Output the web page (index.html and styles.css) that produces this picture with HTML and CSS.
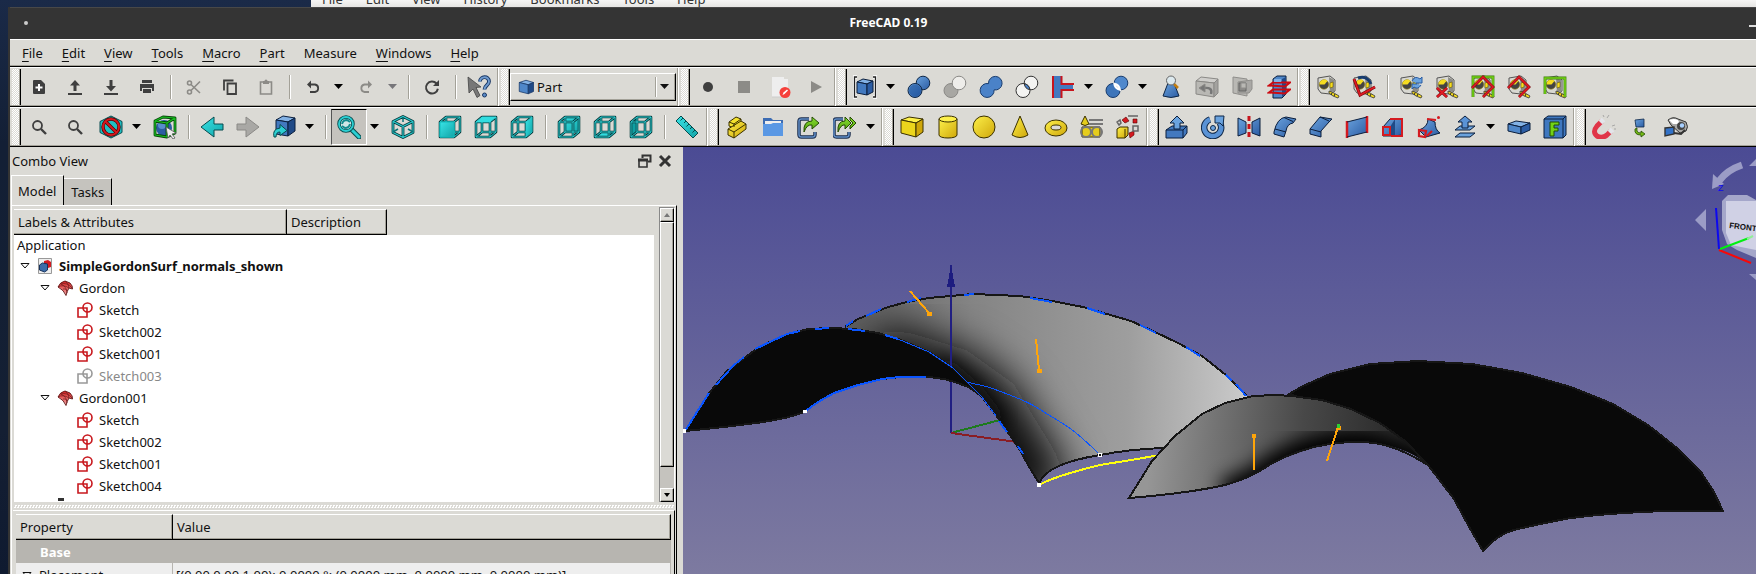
FILE: index.html
```html
<!DOCTYPE html>
<html lang="en">
<head>
<meta charset="utf-8">
<title>FreeCAD 0.19</title>
<link rel="stylesheet" href="styles.css">
</head>
<body>
<svg class="sprite" width="0" height="0" aria-hidden="true">
<defs>
<linearGradient id="gb" x1="0" y1="0" x2="1" y2="1"><stop offset="0" stop-color="#6ba3de"/><stop offset="1" stop-color="#2b5ca3"/></linearGradient>
<linearGradient id="gy" x1="0" y1="0" x2="1" y2="1"><stop offset="0" stop-color="#fdf04a"/><stop offset="1" stop-color="#cfa70a"/></linearGradient>
<linearGradient id="gt" x1="0" y1="0" x2="1" y2="1"><stop offset="0" stop-color="#38e3e6"/><stop offset="1" stop-color="#12a5a8"/></linearGradient>
<linearGradient id="gg" x1="0" y1="0" x2="0" y2="1"><stop offset="0" stop-color="#8ae234"/><stop offset="1" stop-color="#4e9a06"/></linearGradient>
<linearGradient id="gr" x1="0" y1="0" x2="0" y2="1"><stop offset="0" stop-color="#d82020"/><stop offset="1" stop-color="#f4a6a6"/></linearGradient>
<g id="wire" fill="none" stroke="#073c3f" stroke-width="2.6" stroke-linejoin="round"><path d="M2 7h14v15H2zM2 7l6-5h14v15l-6 5M16 7l6-5M8 2v15h14M8 17l-6 5"/></g>
<g id="wire2" fill="none" stroke="#2ccfd2" stroke-width="1" stroke-linejoin="round"><path d="M2 7h14v15H2zM2 7l6-5h14v15l-6 5M16 7l6-5M8 2v15h14M8 17l-6 5"/></g>
<g id="tape"><path d="M2 3l12-2 5 4v11l-5 3-9-1-3-4z" fill="#d8d8d2" stroke="#555"/><path d="M13 2l5 3v11l-4 2z" fill="#8b8b86"/><circle cx="8" cy="9.500" r="4.700" fill="#444" stroke="#8d7b00" stroke-width=".6"/><path d="M3.500 9.500a4.700 4.700 0 0 1 8-3.500l-3 3.500z" fill="#f5dc20"/><path d="M14 8l3-1v5l-3 1z" fill="#f5dc20" stroke="#554900" stroke-width=".5"/><path d="M13 16l5 2 5 3-1 2-5-2-4-3z" fill="#f5dc20" stroke="#333" stroke-width=".8"/><path d="M16 18l-1 2M19 19l-1 2" stroke="#222" stroke-width="1"/></g>
</defs>
<symbol id="i-new" viewBox="0 0 24 24"><path d="M7 5h7l4 4v9a1 1 0 0 1-1 1H7a1 1 0 0 1-1-1V6a1 1 0 0 1 1-1z" fill="#3f3f3f"/><path d="M12 9v7M8.500 12.500h7" stroke="#fff" stroke-width="2"/></symbol>
<symbol id="i-up" viewBox="0 0 24 24"><path d="M12 5l5 5.500h-3.500V16h-3v-5.500H7zM5 18h14v2H5z" fill="#3f3f3f"/></symbol>
<symbol id="i-down" viewBox="0 0 24 24"><path d="M12 16.500L7 11h3.500V5h3v6H17zM5 18h14v2H5z" fill="#3f3f3f"/></symbol>
<symbol id="i-print" viewBox="0 0 24 24"><path d="M7 5h10v3H7zM5 9h14v7h-2v-3H7v3H5z M8 14h8v4H8z" fill="#3f3f3f"/></symbol>
<symbol id="i-cut" viewBox="0 0 24 24" fill="none" stroke="#8c8b87" stroke-width="1.600"><circle cx="7.500" cy="8" r="2"/><circle cx="7.500" cy="17" r="2"/><path d="M9 9.500l9 8.500M9 15.500L18 6.500"/></symbol>
<symbol id="i-copy" viewBox="0 0 24 24" fill="none" stroke="#3f3f3f" stroke-width="1.800"><path d="M9.500 8.500h8.500v10.500H9.500zM6 15.500V5.500h9.500"/></symbol>
<symbol id="i-paste" viewBox="0 0 24 24"><path d="M6.500 7h11v12h-11z" fill="none" stroke="#8c8b87" stroke-width="1.600"/><path d="M9 6h1.500a1.500 1.500 0 0 1 3 0H15v3H9z" fill="#8c8b87"/></symbol>
<symbol id="i-undo" viewBox="0 0 24 24"><path d="M6 9.500L10 5.500v8z" fill="#3f3f3f"/><path d="M9 9.500h5a3.800 3.800 0 0 1 0 7.500H9" fill="none" stroke="#3f3f3f" stroke-width="1.800"/></symbol>
<symbol id="i-redo" viewBox="0 0 24 24"><path d="M17 9.500L13 5.500v8z" fill="#8c8b87"/><path d="M14 9.500H9.500a3.800 3.800 0 0 0 0 7.500H14" fill="none" stroke="#8c8b87" stroke-width="1.800"/></symbol>
<symbol id="i-refresh" viewBox="0 0 24 24"><path d="M16.500 8.500a6 6 0 1 0 1.400 5.200" fill="none" stroke="#3f3f3f" stroke-width="2"/><path d="M19 5v6h-6z" fill="#3f3f3f"/></symbol>
<symbol id="i-what" viewBox="0 0 24 24"><path d="M1 2l13 10-5 .5 4 8-3 2-4-8.500-4 4z" fill="#777" stroke="#444" stroke-width=".8"/><path d="M13 6.500C13 1 22 .5 22 6.500c0 4-4.500 3.500-4.500 8" fill="none" stroke="#173664" stroke-width="3.800"/><path d="M13 6.500C13 1 22 .5 22 6.500c0 4-4.500 3.500-4.500 8" fill="none" stroke="#6f9bd0" stroke-width="1.900"/><circle cx="17.500" cy="20" r="2" fill="#5b8bc8" stroke="#173664"/></symbol>
<symbol id="i-rec" viewBox="0 0 24 24"><circle cx="12" cy="12" r="5" fill="#3f3f3f"/></symbol>
<symbol id="i-stop" viewBox="0 0 24 24"><path d="M6 6h12v12H6z" fill="#8c8b87"/></symbol>
<symbol id="i-macro" viewBox="0 0 24 24"><path d="M4 2h12v2h4v18H4z" fill="#eee"/><path d="M4 22h10" stroke="#ccc"/><circle cx="17" cy="17.500" r="5.500" fill="#f5403b"/><path d="M14.500 20l1-2.500 3.500-3 1 1-3.500 3.500z" fill="#fff"/></symbol>
<symbol id="i-play" viewBox="0 0 24 24"><path d="M7 6l11 6-11 6z" fill="#8c8b87"/></symbol>
<symbol id="i-cube" viewBox="0 0 24 24" stroke="#173664" stroke-linejoin="round"><path d="M3 6l9-3 10 3-7 3z" fill="#82b1e4"/><path d="M3 6l12 3v12L3 18z" fill="#4f87c9"/><path d="M15 9l7-3v12l-7 3z" fill="#204a87"/></symbol>
<symbol id="i-compound" viewBox="0 0 24 24"><path d="M4 2H1v20h3M20 2h3v20h-3" fill="none" stroke="#fff" stroke-width="3.500"/><path d="M4 2H1.500v20H4M20 2h2.500v20H20" fill="none" stroke="#222" stroke-width="1.300"/><g stroke="#0b1e3c" stroke-linejoin="round"><path d="M4 7l6-3 10 2-6 3z" fill="#82b1e4"/><path d="M4 7l10 2v11L4 18z" fill="#4279bf"/><path d="M14 9l6-3v11l-6 3z" fill="#2b5ca3"/></g></symbol>
<symbol id="i-bool" viewBox="0 0 24 24" stroke="#0f2747" stroke-width="1"><circle cx="16" cy="8" r="6.800" fill="url(#gb)"/><circle cx="8" cy="15.500" r="7" fill="url(#gb)"/><circle cx="8" cy="15.500" r="6" fill="#1f559f" stroke="none" opacity=".6"/></symbol>
<symbol id="i-cutb" viewBox="0 0 24 24" stroke="#8a8986"><circle cx="8" cy="15.500" r="7" fill="#a8a7a3"/><circle cx="16" cy="8" r="6.800" fill="#eeedea"/></symbol>
<symbol id="i-union" viewBox="0 0 24 24" stroke="#183c6e"><path d="M9.500 8.600a6.800 6.800 0 1 1 5.600 6.300A7 7 0 1 1 9.500 8.600z" fill="#4a82c8"/></symbol>
<symbol id="i-common" viewBox="0 0 24 24" stroke="#333"><circle cx="16" cy="8" r="6.800" fill="#f4f4f2"/><circle cx="8" cy="15.500" r="7" fill="#f4f4f2"/><path d="M9.300 8.700a6.800 6.800 0 0 0 5.600 6A7 7 0 0 0 9.300 8.700z" fill="#4a82c8"/></symbol>
<symbol id="i-join" viewBox="0 0 24 24"><path d="M3 1h7v22H3zM10 9h12v6H10z" fill="#4279bf"/><path d="M2 1v22M10.500 1v8H23M10.500 23v-8H23" fill="none" stroke="#c8141c" stroke-width="2"/></symbol>
<symbol id="i-split" viewBox="0 0 24 24" stroke="#183c6e"><circle cx="16" cy="8" r="6.800" fill="#4f88cc"/><circle cx="8" cy="15.500" r="7" fill="#3d75ba"/><path d="M9.300 8.700a6.800 6.800 0 0 0 5.600 6A7 7 0 0 0 9.300 8.700z" fill="#dbdad5" stroke="#fff" stroke-width="2"/></symbol>
<symbol id="i-check" viewBox="0 0 24 24"><path d="M9 8h6l5 13q-8 3-16 0z" fill="url(#gb)" stroke="#0f2747"/><path d="M15 9l4 4" stroke="#c17d11" stroke-width="2.500"/><circle cx="12" cy="5.500" r="4.500" fill="#dce9ee" stroke="#666"/></symbol>
<symbol id="i-defeat" viewBox="0 0 24 24" stroke="#8a8986"><path d="M1 6l5-4 17 2-4 4z" fill="#cfcecb"/><path d="M1 6l18 2v14L1 19z" fill="#b9b8b4"/><path d="M19 8l4-4v14l-4 4z" fill="#a3a29f"/><path d="M16 19q2-7-7-6" fill="none" stroke="#777" stroke-width="2.500"/><path d="M4 13l6-4v8z" fill="#777"/></symbol>
<symbol id="i-section" viewBox="0 0 24 24" stroke="#8f8e8b"><path d="M2 2l14 2v17L2 18z" fill="#b9b8b4"/><path d="M7 7l14-2v9l-3 4H7z" fill="#a9a8a5"/><path d="M8 8h7v8H8z" fill="#8a8986" stroke="#666"/><path d="M10 8h5v5h-5z" fill="#b9b8b4"/></symbol>
<symbol id="i-cross" viewBox="0 0 24 24"><path d="M6 4l4-3h9v18l-4 4H6z" fill="#4f87c9" stroke="#0b1e3c"/><path d="M15 4v18l4-3V2z" fill="#204a87"/><g fill="none" stroke="#cc0a12" stroke-width="2"><path d="M2 10.500l4-3h17l-5 4zM2 17.500l4-3h17l-5 4z"/></g><path d="M7 4h7v3H7z" fill="#82b1e4"/></symbol>
<symbol id="i-meas" viewBox="0 0 24 24"><use href="#tape"/></symbol>
<symbol id="i-measang" viewBox="0 0 24 24"><use href="#tape"/><path d="M6 3q9-3 13 6" fill="none" stroke="#183c6e" stroke-width="3"/><path d="M2 4l6 16 15-8" fill="none" stroke="#7c0a0e" stroke-width="3"/><path d="M2 4l6 16 15-8" fill="none" stroke="#e01b24" stroke-width="1.600"/></symbol>
<symbol id="i-measref" viewBox="0 0 24 24"><use href="#tape"/><path d="M13 6q3-6 8-2l2-2v6h-6M22 10q-3 5-7 2l-2 2V9h5" fill="#6ba3de" stroke="#2b5ca3" stroke-width="1"/></symbol>
<symbol id="i-measclr" viewBox="0 0 24 24"><use href="#tape"/><path d="M2 13l10 9M12 13L2 22" stroke="#7c0a0e" stroke-width="3"/><path d="M2 13l10 9M12 13L2 22" stroke="#e01b24" stroke-width="1.700"/></symbol>
<symbol id="i-measall" viewBox="0 0 24 24"><use href="#tape"/><path d="M2 22V2h20v20" fill="none" stroke="#3a7a08" stroke-width="2.800"/><path d="M2 22V2h20v20" fill="none" stroke="#73d216" stroke-width="1.600"/><path d="M1 13L12 2l10 10-10 10" fill="none" stroke="#7c0a0e" stroke-width="2.800"/><path d="M1 13L12 2l10 10-10 10" fill="none" stroke="#e01b24" stroke-width="1.600"/></symbol>
<symbol id="i-meas3d" viewBox="0 0 24 24"><use href="#tape"/><path d="M1 13L12 2l10 10-10 10" fill="none" stroke="#7c0a0e" stroke-width="2.800"/><path d="M1 13L12 2l10 10-10 10" fill="none" stroke="#e01b24" stroke-width="1.600"/></symbol>
<symbol id="i-measdel" viewBox="0 0 24 24"><use href="#tape"/><path d="M2 19V3h20v19" fill="none" stroke="#3a7a08" stroke-width="2.800"/><path d="M2 19V3h20v19" fill="none" stroke="#73d216" stroke-width="1.600"/></symbol>
<symbol id="i-zoom" viewBox="0 0 24 24" fill="none" stroke="#3f3f3f"><circle cx="10.500" cy="10.500" r="4.500" stroke-width="1.800"/><path d="M14 14l5 5" stroke-width="2.400"/></symbol>
<symbol id="i-nostyle" viewBox="0 0 24 24"><path d="M12 1l11 5.500v11L12 23 1 17.500v-11z" fill="#1fc0c4" stroke="#064b4e"/><circle cx="12" cy="12" r="8" fill="none" stroke="#500" stroke-width="3.400"/><path d="M6.500 6.500l11 11" stroke="#500" stroke-width="3.400"/><circle cx="12" cy="12" r="8" fill="none" stroke="#d41a20" stroke-width="2"/><path d="M6.500 6.500l11 11" stroke="#d41a20" stroke-width="2"/></symbol>
<symbol id="i-boxsel" viewBox="0 0 24 24"><circle cx="11" cy="13" r="8" fill="#2b5ca3"/><circle cx="9" cy="10" r="4" fill="#6ba3de" opacity=".7"/><g fill="none" stroke-linejoin="round"><path d="M2 6l12 2v14L2 20zM2 6l8-4 12 1-8 5M22 3v15l-8 4" stroke="#07490a" stroke-width="2.800"/><path d="M2 6l12 2v14L2 20zM2 6l8-4 12 1-8 5M22 3v15l-8 4" stroke="#18c020" stroke-width="1.200"/></g><path d="M13 12l10 6-4 1 3 4-2 1-3-4-2 3z" fill="#eee" stroke="#555" stroke-width=".8"/></symbol>
<symbol id="i-left" viewBox="0 0 24 24"><path d="M1 12L14 2v7h9v6h-9v7z" fill="url(#gt)" stroke="#064b4e"/></symbol>
<symbol id="i-right" viewBox="0 0 24 24"><path d="M23 12L10 2v7H1v6h9v7z" fill="#a9a8a5" stroke="#8a8986"/></symbol>
<symbol id="i-link" viewBox="0 0 24 24" stroke-linejoin="round"><g stroke="#0b1e3c"><path d="M4 5l7-4 12 2-7 4z" fill="#82b1e4"/><path d="M4 5l12 2v14L4 19z" fill="#4279bf"/><path d="M16 7l7-4v13l-7 5z" fill="#204a87"/></g><path d="M2 22q-2-8 6-9V9.500l7 6-7 5V17q-4 0-4 5z" fill="#2ccfd2" stroke="#064b4e"/></symbol>
<symbol id="i-fit" viewBox="0 0 24 24"><path d="M14 14l8 8" stroke="#064b4e" stroke-width="5" stroke-linecap="round"/><path d="M14 14l8 8" stroke="#2ccfd2" stroke-width="3" stroke-linecap="round"/><circle cx="9" cy="9" r="7" fill="#cfe6e6" stroke="#064b4e" stroke-width="3.500"/><circle cx="9" cy="9" r="7" fill="none" stroke="#2ccfd2" stroke-width="1.800"/><path d="M5 9q1-4 5-4l3 2M13 9q-1 4-5 4l-3-2" fill="none" stroke="#128b8e" stroke-width="2"/></symbol>
<symbol id="i-iso" viewBox="0 0 24 24" fill="none" stroke-linejoin="round"><path d="M12 1.500l10 5v11l-10 5-10-5v-11zM2 6.500l10 5 10-5M12 11.500v11" stroke="#073c3f" stroke-width="2.800"/><path d="M12 1.500l10 5v11l-10 5-10-5v-11zM2 6.500l10 5 10-5M12 11.500v11" stroke="#2ccfd2" stroke-width="1.100"/><path d="M12 2v5M2 17l5-3M22 17l-5-3" stroke="#0d7478" stroke-width="1.500"/></symbol>
<symbol id="i-front" viewBox="0 0 24 24"><use href="#wire"/><use href="#wire2"/><path d="M2 7h14v15H2z" fill="url(#gt)" stroke="#1bb"/></symbol>
<symbol id="i-top" viewBox="0 0 24 24"><use href="#wire"/><use href="#wire2"/><path d="M2 7l6-5h14l-6 5z" fill="#32dde0"/></symbol>
<symbol id="i-rightv" viewBox="0 0 24 24"><use href="#wire"/><use href="#wire2"/><path d="M16 7l6-5v15l-6 5z" fill="url(#gt)"/></symbol>
<symbol id="i-rear" viewBox="0 0 24 24"><path d="M8 2h14v15H8z" fill="url(#gt)"/><use href="#wire"/><use href="#wire2"/></symbol>
<symbol id="i-bottom" viewBox="0 0 24 24"><path d="M2 22l6-5h14l-6 5z" fill="#32dde0"/><use href="#wire"/><use href="#wire2"/></symbol>
<symbol id="i-leftv" viewBox="0 0 24 24"><path d="M2 7l6-5v15l-6 5z" fill="#109fa2"/><use href="#wire"/><use href="#wire2"/></symbol>
<symbol id="i-ruler" viewBox="0 0 24 24"><path d="M5 1l17 17-5 5L0 6z" fill="url(#gt)" stroke="#064b4e"/><path d="M7 3L4.500 5.500M10 6l-2 2M13 9l-2.500 2.500M16 12l-2 2M19 15l-2.500 2.500" stroke="#064b4e"/></symbol>
<symbol id="i-part" viewBox="0 0 24 24" stroke="#3a3000" stroke-linejoin="round"><path d="M4 7l7-5 5 2v4l-7 5-5-2z" fill="#f4e22c"/><path d="M3 14l13-8 5 3v5L9 23l-6-3z" fill="url(#gy)"/><path d="M3 14l6 3 12-8M9 17v6M4 7l5 2 7-5M9 9v3" fill="none"/></symbol>
<symbol id="i-group" viewBox="0 0 24 24"><path d="M2 3h8l2 2h10v5H2z" fill="#3c6cb3"/><path d="M4 6h16v4H4z" fill="#eee"/><path d="M2 9h8l2-1h10v13H2z" fill="#5a98e4"/></symbol>
<symbol id="i-mklink" viewBox="0 0 24 24"><path d="M12 4H4.500Q2 4 2 6.500v13Q2 22 4.500 22h11q2.500 0 2.500-2.500V17" fill="none" stroke="#1d2f4e" stroke-width="3.500"/><path d="M12 4H4.500Q2 4 2 6.500v13Q2 22 4.500 22h11q2.500 0 2.500-2.500V17" fill="none" stroke="#5f8cc4" stroke-width="1.500"/><path d="M7 17q-1-11 8-11V2l7 6-7 6v-4q-5-1-8 7z" fill="url(#gg)" stroke="#234b02"/></symbol>
<symbol id="i-mklinks" viewBox="0 0 24 24"><path d="M10 4H3.500Q1 4 1 6.500v13Q1 22 3.500 22h10q2.500 0 2.500-2.500V17" fill="none" stroke="#1d2f4e" stroke-width="3.500"/><path d="M10 4H3.500Q1 4 1 6.500v13Q1 22 3.500 22h10q2.500 0 2.500-2.500V17" fill="none" stroke="#5f8cc4" stroke-width="1.500"/><path d="M5 17q-1-11 7-11V2l6 6-6 6v-4q-4-1-7 7zM17 2l6 6-6 6v-3l3-3-3-3z" fill="url(#gg)" stroke="#234b02"/></symbol>
<symbol id="i-ybox" viewBox="0 0 24 24" stroke="#3a3000" stroke-linejoin="round"><path d="M1 5l8-3 14 2-7 4z" fill="#fdf04a"/><path d="M1 5l15 3v14L1 18z" fill="#ecd51c"/><path d="M16 8l7-4v13l-7 5z" fill="#cfa70a"/></symbol>
<symbol id="i-cyl" viewBox="0 0 24 24" stroke="#3a3000"><path d="M3 4v16c0 4 18 4 18 0V4z" fill="url(#gy)"/><ellipse cx="12" cy="4" rx="9" ry="3" fill="#fdf04a"/></symbol>
<symbol id="i-sphere" viewBox="0 0 24 24"><circle cx="12" cy="12" r="11" fill="url(#gy)" stroke="#3a3000"/></symbol>
<symbol id="i-cone" viewBox="0 0 24 24"><path d="M12 1l8 19q-8 5-16 0z" fill="url(#gy)" stroke="#3a3000"/></symbol>
<symbol id="i-torus" viewBox="0 0 24 24" stroke="#3a3000"><ellipse cx="12" cy="13" rx="11" ry="8" fill="url(#gy)"/><ellipse cx="12" cy="12.500" rx="5" ry="2.500" fill="#dbdad5"/></symbol>
<symbol id="i-prims" viewBox="0 0 24 24"><path d="M5 1l4 8q-4 3-8 0zM2 12h18v10H2z" fill="#e5cd1c" stroke="#3a3000"/><g fill="none" stroke="#777" stroke-width="2"><circle cx="6" cy="17" r="5"/><circle cx="17" cy="17" r="5"/><path d="M9 5h14M9 9h14"/></g><circle cx="6" cy="17" r="2" fill="#e5cd1c"/></symbol>
<symbol id="i-builder" viewBox="0 0 24 24"><path d="M1 14l3-2h8v8l-3 3H1z" fill="url(#gy)" stroke="#3a3000"/><path d="M9 14v9" stroke="#3a3000"/><path d="M6 5l4-3 3 4-4 2zM17 4h4v4h-4zM13 18l5-2v4l-4 3z" fill="#d41a20" stroke="#500" stroke-width=".6"/><path d="M12 1h10M17 11h5v5h-5zM1 7l3-2 1 3-2 2z" fill="none" stroke="#666" stroke-width="1.500"/></symbol>
<symbol id="i-extrude" viewBox="0 0 24 24" stroke="#0b1e3c" stroke-linejoin="round"><path d="M1 15l6-4h15v7l-4 5H1z" fill="#4279bf"/><path d="M1 15h17l4-4M18 15v8" fill="none"/><path d="M12 1l7 7h-4v6H9V8H5z" fill="#6ba3de"/></symbol>
<symbol id="i-revolve" viewBox="0 0 24 24"><path d="M9 4.500a8.500 8.500 0 1 0 9.500 3" fill="none" stroke="#0f2747" stroke-width="6.500"/><path d="M9 4.500a8.500 8.500 0 1 0 9.500 3" fill="none" stroke="#5a93d6" stroke-width="4.500"/><path d="M14 1h9l-1 10-3-3-5 0z" fill="#6ba3de" stroke="#0f2747"/><circle cx="12" cy="13" r="2.500" fill="#6ba3de" stroke="#0f2747"/></symbol>
<symbol id="i-mirror" viewBox="0 0 24 24"><path d="M1 3l8 4v11l-8 3zM23 3l-8 4v11l8 3z" fill="url(#gb)" stroke="#0b1e3c"/><path d="M12 1v22" stroke="#c8141c" stroke-width="3" stroke-dasharray="5 3"/></symbol>
<symbol id="i-fillet" viewBox="0 0 24 24"><path d="M1 17Q4 3 13 2l10 2-3 4q-6 1-7 8l-2 6-10-3z" fill="url(#gb)" stroke="#0b1e3c"/><path d="M2 14l11 3M11 2.500l9 4" fill="none" stroke="#0b1e3c"/></symbol>
<symbol id="i-chamfer" viewBox="0 0 24 24"><path d="M1 14L11 2l12 2-3 3-8 9v6L1 19z" fill="url(#gb)" stroke="#0b1e3c"/><path d="M1 14l11 3M11 2l9 4" stroke="#0b1e3c"/></symbol>
<symbol id="i-ruled" viewBox="0 0 24 24"><path d="M2 7l20-5v15L2 22z" fill="url(#gb)"/><path d="M2 6v17M22 1v17" stroke="#d41a20" stroke-width="2.500"/><path d="M2 7l20-5M2 22l20-5" stroke="#0b1e3c"/></symbol>
<symbol id="i-loft" viewBox="0 0 24 24"><path d="M2 12l7-8h12v16l-8 1H2z" fill="url(#gb)" stroke="#0b1e3c"/><path d="M9 12l5-8v16l-5 1z" fill="#204a87"/><path d="M9 4h12v17l-11 0M2 12h7v8H2z" fill="none" stroke="#d41a20" stroke-width="2"/></symbol>
<symbol id="i-sweep" viewBox="0 0 24 24"><path d="M2 15Q11 12 11 4l7 3q0 8 5 11L9 22z" fill="url(#gb)" stroke="#0b1e3c"/><path d="M10 4l9 1M2 15l7 1-1 6-6-1zM10 21l5-5" fill="none" stroke="#d41a20" stroke-width="2.200"/><circle cx="21.500" cy="2.500" r="1.500" fill="#d41a20"/></symbol>
<symbol id="i-offset" viewBox="0 0 24 24" stroke="#0b1e3c" stroke-linejoin="round"><path d="M2 22l5-4h15l-5 4zM2 15l5-4h15l-5 4z" fill="#6ba3de"/><path d="M12 1l7 6h-4v6H9V7H5z" fill="#5a93d6"/></symbol>
<symbol id="i-thick" viewBox="0 0 24 24" stroke="#0b1e3c" stroke-linejoin="round"><path d="M1 9l8-3 14 2-9 4z" fill="#82b1e4"/><path d="M1 9l13 3v7L1 16z" fill="#4f87c9"/><path d="M14 12l9-4v7l-9 4z" fill="#2b5ca3"/></symbol>
<symbol id="i-face" viewBox="0 0 24 24"><path d="M1 4l4-3h18v19l-3 3H1z" fill="#3f78c0" stroke="#0b1e3c"/><path d="M1 4h19v19M20 4l3-3" fill="none" stroke="#0b1e3c"/><path d="M7 21V7h9v3h-5v3h4v3h-4v5z" fill="#73d216" stroke="#234b02"/></symbol>
<symbol id="i-magnet" viewBox="0 0 24 24"><path d="M10 6L5 11q-5 6 0 10 5 3 10-1l4-4" fill="none" stroke="#e03548" stroke-width="5"/><path d="M8.500 7.500l3-3M17.500 17.500l3-3" stroke="#e3e5ea" stroke-width="5"/><path d="M12 2l-1-2M15 3l2-3M20 11l3-1M22 14h2" stroke="#999" stroke-width=".8"/></symbol>
<symbol id="i-toggle" viewBox="0 0 24 24"><path d="M7 5l9-1v8H8z" fill="url(#gb)" stroke="#0f2747" stroke-width=".8"/><path d="M9 13q-1 5 4 5v-2l4 3-4 3v-2q-7 0-6-6z" fill="#73b816" stroke="#234b02" stroke-width=".8"/></symbol>
<symbol id="i-camera" viewBox="0 0 24 24"><path d="M4 5q5-4 10-1l8 3q3 5 0 9l-6 2-9-8z" fill="#a8a8a6" stroke="#333"/><path d="M5 5q5-2 9 0l2 4-7 0z" fill="#fff"/><circle cx="17" cy="11" r="4" fill="#444"/><circle cx="18" cy="10.500" r="2.200" fill="#a8d0ff"/><path d="M1 13l9-1v7l-9 2z" fill="#3272c8" stroke="#333" stroke-width="1.400"/><path d="M10 18l7 1 4-4" fill="none" stroke="#333" stroke-width="2"/></symbol>
<symbol id="i-doc" viewBox="0 0 16 16"><path d="M1.500 .5h13v15h-13z" fill="#eee" stroke="#999"/><path d="M7 3l4-1 3 2v5l-3 1-4-2z" fill="#d41a20"/><path d="M2.500 7l3-2 5 1v6l-3 2-5-2z" fill="#3d6ca8" stroke="#17325c"/></symbol>
<symbol id="i-gordon" viewBox="0 0 16 16"><path d="M1 7Q3 2 8 1l5 2q3 3 2.500 6l-3.500-1q-2 3-3 7.500Q7 10 1 7z" fill="url(#gr)" stroke="#5c1414" stroke-width=".9"/><path d="M4 4q6 3 6 9M8 1q4 3 4 7M1 7q5-3 11 1M4 4q6-2 11 4M6 9q3-1 4 2" fill="none" stroke="#6a1a1a" stroke-width=".7"/></symbol>
<symbol id="i-sketch" viewBox="0 0 16 16" fill="none" stroke="currentColor" stroke-width="1.600"><path d="M1 6h9v9H1z"/><circle cx="10.500" cy="5.500" r="4.500"/></symbol>
<symbol id="i-tri" viewBox="0 0 10 6"><path d="M0 0h9L4.500 5z" fill="currentColor"/></symbol>
<symbol id="i-exp" viewBox="0 0 10 6"><path d="M1 .5h8L5 5z" fill="none" stroke="#111"/></symbol>
</svg>

<div class="desktop">
<div class="browser-menu"><span><u>F</u>ile</span><span><u>E</u>dit</span><span><u>V</u>iew</span><span>Hi<u>s</u>tory</span><span><u>B</u>ookmarks</span><span><u>T</u>ools</span><span><u>H</u>elp</span></div>

<main class="window">
<header class="titlebar"><span class="dot"></span><h1>FreeCAD 0.19</h1><button class="minimize" aria-label="Minimize"></button></header>

<div class="client">
<nav class="menubar"><button><u>F</u>ile</button><button><u>E</u>dit</button><button><u>V</u>iew</button><button><u>T</u>ools</button><button><u>M</u>acro</button><button><u>P</u>art</button><button>Measure</button><button><u>W</u>indows</button><button><u>H</u>elp</button></nav>

<div class="toolrow">
<div class="group"><i class="grip"></i>
<button class="tb" aria-label="New"><svg><use href="#i-new"/></svg></button>
<button class="tb" aria-label="Open"><svg><use href="#i-up"/></svg></button>
<button class="tb" aria-label="Save"><svg><use href="#i-down"/></svg></button>
<button class="tb" aria-label="Print"><svg><use href="#i-print"/></svg></button>
<i class="sep"></i>
<button class="tb" aria-label="Cut"><svg><use href="#i-cut"/></svg></button>
<button class="tb" aria-label="Copy"><svg><use href="#i-copy"/></svg></button>
<button class="tb" aria-label="Paste"><svg><use href="#i-paste"/></svg></button>
<i class="sep"></i>
<button class="tb" aria-label="Undo"><svg><use href="#i-undo"/></svg></button>
<button class="drop" aria-label="Undo list"><svg><use href="#i-tri"/></svg></button>
<button class="tb" aria-label="Redo"><svg><use href="#i-redo"/></svg></button>
<button class="drop off" aria-label="Redo list"><svg><use href="#i-tri"/></svg></button>
<i class="sep"></i>
<button class="tb" aria-label="Refresh"><svg><use href="#i-refresh"/></svg></button>
<i class="sep"></i>
<button class="tb" aria-label="What's this"><svg><use href="#i-what"/></svg></button>
</div>
<div class="group"><i class="grip"></i>
<label class="workbench"><svg class="wb-icon"><use href="#i-cube"/></svg><select aria-label="Workbench"><option>Part</option></select><i class="sep"></i><svg class="wb-arrow"><use href="#i-tri"/></svg></label>
</div>
<div class="group"><i class="grip"></i>
<button class="tb" aria-label="Record macro"><svg><use href="#i-rec"/></svg></button>
<button class="tb" aria-label="Stop macro"><svg><use href="#i-stop"/></svg></button>
<button class="tb" aria-label="Macros"><svg><use href="#i-macro"/></svg></button>
<button class="tb" aria-label="Execute macro"><svg><use href="#i-play"/></svg></button>
</div>
<div class="group"><i class="grip"></i>
<button class="tb" aria-label="Compound"><svg><use href="#i-compound"/></svg></button>
<button class="drop" aria-label="Compound tools"><svg><use href="#i-tri"/></svg></button>
<button class="tb" aria-label="Boolean"><svg><use href="#i-bool"/></svg></button>
<button class="tb" aria-label="Cut shapes"><svg><use href="#i-cutb"/></svg></button>
<button class="tb" aria-label="Union"><svg><use href="#i-union"/></svg></button>
<button class="tb" aria-label="Intersection"><svg><use href="#i-common"/></svg></button>
<button class="tb" aria-label="Connect"><svg><use href="#i-join"/></svg></button>
<button class="drop" aria-label="Join tools"><svg><use href="#i-tri"/></svg></button>
<button class="tb" aria-label="Boolean fragments"><svg><use href="#i-split"/></svg></button>
<button class="drop" aria-label="Split tools"><svg><use href="#i-tri"/></svg></button>
<button class="tb" aria-label="Check geometry"><svg><use href="#i-check"/></svg></button>
<button class="tb" aria-label="Defeaturing"><svg><use href="#i-defeat"/></svg></button>
<button class="tb" aria-label="Section"><svg><use href="#i-section"/></svg></button>
<button class="tb" aria-label="Cross-sections"><svg><use href="#i-cross"/></svg></button>
</div>
<div class="group last"><i class="grip"></i>
<button class="tb" aria-label="Measure linear"><svg><use href="#i-meas"/></svg></button>
<button class="tb" aria-label="Measure angular"><svg><use href="#i-measang"/></svg></button>
<i class="sep"></i>
<button class="tb" aria-label="Refresh measurements"><svg><use href="#i-measref"/></svg></button>
<button class="tb" aria-label="Clear measurements"><svg><use href="#i-measclr"/></svg></button>
<button class="tb" aria-label="Toggle all"><svg><use href="#i-measall"/></svg></button>
<button class="tb" aria-label="Toggle 3D"><svg><use href="#i-meas3d"/></svg></button>
<button class="tb" aria-label="Toggle delta"><svg><use href="#i-measdel"/></svg></button>
</div>
</div>

<div class="toolrow">
<div class="group"><i class="grip"></i>
<button class="tb" aria-label="Fit all"><svg><use href="#i-zoom"/></svg></button>
<button class="tb" aria-label="Fit selection"><svg><use href="#i-zoom"/></svg></button>
<button class="tb" aria-label="Draw style"><svg><use href="#i-nostyle"/></svg></button>
<button class="drop" aria-label="Draw styles"><svg><use href="#i-tri"/></svg></button>
<button class="tb" aria-label="Bounding box"><svg><use href="#i-boxsel"/></svg></button>
<i class="sep"></i>
<button class="tb" aria-label="Back"><svg><use href="#i-left"/></svg></button>
<button class="tb" aria-label="Forward"><svg><use href="#i-right"/></svg></button>
<button class="tb" aria-label="Go to linked object"><svg><use href="#i-link"/></svg></button>
<button class="drop" aria-label="Link actions"><svg><use href="#i-tri"/></svg></button>
<i class="sep"></i>
<button class="tb on" aria-label="Sync view" aria-pressed="true"><svg><use href="#i-fit"/></svg></button>
<button class="drop" aria-label="View sync options"><svg><use href="#i-tri"/></svg></button>
<button class="tb" aria-label="Isometric"><svg><use href="#i-iso"/></svg></button>
<i class="sep"></i>
<button class="tb" aria-label="Front"><svg><use href="#i-front"/></svg></button>
<button class="tb" aria-label="Top"><svg><use href="#i-top"/></svg></button>
<button class="tb" aria-label="Right"><svg><use href="#i-rightv"/></svg></button>
<i class="sep"></i>
<button class="tb" aria-label="Rear"><svg><use href="#i-rear"/></svg></button>
<button class="tb" aria-label="Bottom"><svg><use href="#i-bottom"/></svg></button>
<button class="tb" aria-label="Left"><svg><use href="#i-leftv"/></svg></button>
<i class="sep"></i>
<button class="tb" aria-label="Measure distance"><svg><use href="#i-ruler"/></svg></button>
</div>
<div class="group"><i class="grip"></i>
<button class="tb" aria-label="Create part"><svg><use href="#i-part"/></svg></button>
<button class="tb" aria-label="Create group"><svg><use href="#i-group"/></svg></button>
<button class="tb" aria-label="Make link"><svg><use href="#i-mklink"/></svg></button>
<button class="tb" aria-label="Make sub-link"><svg><use href="#i-mklinks"/></svg></button>
<button class="drop" aria-label="Link options"><svg><use href="#i-tri"/></svg></button>
</div>
<div class="group"><i class="grip"></i>
<button class="tb" aria-label="Cube"><svg><use href="#i-ybox"/></svg></button>
<button class="tb" aria-label="Cylinder"><svg><use href="#i-cyl"/></svg></button>
<button class="tb" aria-label="Sphere"><svg><use href="#i-sphere"/></svg></button>
<button class="tb" aria-label="Cone"><svg><use href="#i-cone"/></svg></button>
<button class="tb" aria-label="Torus"><svg><use href="#i-torus"/></svg></button>
<button class="tb" aria-label="Primitives"><svg><use href="#i-prims"/></svg></button>
<button class="tb" aria-label="Shape builder"><svg><use href="#i-builder"/></svg></button>
</div>
<div class="group"><i class="grip"></i>
<button class="tb" aria-label="Extrude"><svg><use href="#i-extrude"/></svg></button>
<button class="tb" aria-label="Revolve"><svg><use href="#i-revolve"/></svg></button>
<button class="tb" aria-label="Mirror"><svg><use href="#i-mirror"/></svg></button>
<button class="tb" aria-label="Fillet"><svg><use href="#i-fillet"/></svg></button>
<button class="tb" aria-label="Chamfer"><svg><use href="#i-chamfer"/></svg></button>
<button class="tb" aria-label="Ruled surface"><svg><use href="#i-ruled"/></svg></button>
<button class="tb" aria-label="Loft"><svg><use href="#i-loft"/></svg></button>
<button class="tb" aria-label="Sweep"><svg><use href="#i-sweep"/></svg></button>
<button class="tb" aria-label="Offset"><svg><use href="#i-offset"/></svg></button>
<button class="drop" aria-label="Offset options"><svg><use href="#i-tri"/></svg></button>
<button class="tb" aria-label="Thickness"><svg><use href="#i-thick"/></svg></button>
<button class="tb" aria-label="Projection on surface"><svg><use href="#i-face"/></svg></button>
</div>
<div class="group last"><i class="grip"></i>
<button class="tb" aria-label="Snap"><svg><use href="#i-magnet"/></svg></button>
<button class="tb" aria-label="Toggle object"><svg><use href="#i-toggle"/></svg></button>
<button class="tb" aria-label="Camera"><svg><use href="#i-camera"/></svg></button>
</div>
</div>

<div class="work">
<aside class="dock">
<div class="dock-title"><h2>Combo View</h2>
<button aria-label="Float"><svg viewBox="0 0 14 14"><path d="M4.500 4V1.500h8v6H10" fill="none" stroke="#333" stroke-width="2"/><path d="M1 6h8v7H1z" fill="none" stroke="#333" stroke-width="1.600"/><path d="M0 4.500h10v3H0z" fill="#333"/></svg></button>
<button aria-label="Close"><svg viewBox="0 0 14 14"><path d="M2 2l10 10M12 2L2 12" stroke="#333" stroke-width="3"/></svg></button></div>
<div class="tabs" role="tablist"><button class="tab active" role="tab" aria-selected="true">Model</button><button class="tab" role="tab">Tasks</button></div>
<div class="pane">
<div class="tree-area">
<section class="tree">
<div class="tree-head"><span class="col-labels">Labels &amp; Attributes</span><span class="col-desc">Description</span></div>
<ul class="rows">
<li class="l0">Application</li>
<li class="l1"><svg class="exp"><use href="#i-exp"/></svg><svg class="ic"><use href="#i-doc"/></svg><b>SimpleGordonSurf_normals_shown</b></li>
<li class="l2"><svg class="exp"><use href="#i-exp"/></svg><svg class="ic"><use href="#i-gordon"/></svg>Gordon</li>
<li class="l3"><svg class="ic"><use href="#i-sketch"/></svg>Sketch</li>
<li class="l3"><svg class="ic"><use href="#i-sketch"/></svg>Sketch002</li>
<li class="l3"><svg class="ic"><use href="#i-sketch"/></svg>Sketch001</li>
<li class="l3 hidden"><svg class="ic"><use href="#i-sketch"/></svg>Sketch003</li>
<li class="l2"><svg class="exp"><use href="#i-exp"/></svg><svg class="ic"><use href="#i-gordon"/></svg>Gordon001</li>
<li class="l3"><svg class="ic"><use href="#i-sketch"/></svg>Sketch</li>
<li class="l3"><svg class="ic"><use href="#i-sketch"/></svg>Sketch002</li>
<li class="l3"><svg class="ic"><use href="#i-sketch"/></svg>Sketch001</li>
<li class="l3"><svg class="ic"><use href="#i-sketch"/></svg>Sketch004</li>
<li class="next"><i></i></li>
</ul>
</section>
<div class="scroll"><button class="up" aria-label="Scroll up"><svg viewBox="0 0 10 6"><path d="M5 1l3 4H2z" fill="#777"/></svg></button><div class="thumb"></div><div class="track"></div><button aria-label="Scroll down"><svg viewBox="0 0 10 6"><path d="M2 1h6L5 5z" fill="#000"/></svg></button></div>
</div>
<div class="splitter"></div>
<div class="props">
<table>
<thead><tr><th class="prop-name">Property</th><th>Value</th></tr></thead>
<tbody>
<tr class="cat"><td colspan="2">Base</td></tr>
<tr class="val"><td><svg class="exp"><use href="#i-exp"/></svg>Placement</td><td>[(0.00 0.00 1.00); 0.0000 °; (0.0000 mm&nbsp; 0.0000 mm&nbsp; 0.0000 mm)]</td></tr>
</tbody>
</table>
</div>
</div>
</aside>

<section class="view">
<svg viewBox="683 147 1073 427" preserveAspectRatio="xMinYMin slice" role="img" aria-label="3D view">
<defs>
<linearGradient id="s1" gradientUnits="userSpaceOnUse" x1="850" y1="370" x2="1247" y2="380"><stop offset="0" stop-color="#606060"/><stop offset=".3" stop-color="#848484"/><stop offset=".7" stop-color="#9e9e9e"/><stop offset="1" stop-color="#cacaca"/></linearGradient>
<linearGradient id="s2" gradientUnits="userSpaceOnUse" x1="1150" y1="450" x2="1400" y2="470"><stop offset="0" stop-color="#969696"/><stop offset=".25" stop-color="#747474"/><stop offset=".6" stop-color="#484848"/><stop offset="1" stop-color="#282828"/></linearGradient>
<clipPath id="c1"><path d="M845 327L858 319 888 307 907 302 929 298 973 294 1020 296 1052 301 1083 307 1107 314 1131 321 1155 332 1178 343 1202 356 1226 375 1247 396V450L1164 448 1131 450 1100 455Q1045 464 1039 483L1028 465 1020 450 998 418 982 397 967 382 953 368 929 352 901 340 878 333 854 329z"/></clipPath>
<clipPath id="c2"><path d="M1129 498L1152 461 1175 436 1202 414 1225 403 1253 396 1276 395 1292 396 1322 400 1351 409 1380 423 1405 441 1428 465Q1410 449 1380 444T1330 444Q1300 450 1271 464C1260 470 1258 475 1225 485Q1190 493 1129 498z"/></clipPath>
<filter id="blur" x="-40%" y="-40%" width="180%" height="180%"><feGaussianBlur stdDeviation="20"/></filter>
<filter id="blur2" x="-30%" y="-30%" width="160%" height="160%"><feGaussianBlur stdDeviation="9"/></filter>
</defs>
<g class="scene">
<g fill="none" stroke-width="2"><path d="M951 433V268" stroke="#211f82"/><path d="M951 433l49-13" stroke="#1e7a1e"/><path d="M951 433l66 9" stroke="#8a1d24"/></g>
<g clip-path="url(#c1)"><path d="M840 290h420v200H840z" fill="url(#s1)"/><path d="M870 360L950 385 985 410 1040 500" fill="none" stroke="#0c0c0c" stroke-width="76" filter="url(#blur)"/><path d="M940 362L975 392 1000 425" fill="none" stroke="#0c0c0c" stroke-width="18" opacity=".8" filter="url(#blur2)"/></g>
<path d="M845 327L858 319 888 307 907 302 929 298 973 294 1020 296 1052 301 1083 307 1107 314 1131 321 1155 332 1178 343 1202 356 1226 375 1247 396" fill="none" stroke="#161616" stroke-width="2"/>
<path d="M846 326l7-5M866 316l15-7M907 302l14-4M964 295l10-1M1030 298l22 4M1087 308l18 6M1140 325l16 8M1186 347l14 9M1226 375l6 6M1236 384l10 12" fill="none" stroke="#0a55ff" stroke-width="2"/>
<path d="M685 431L710 392 727 371 759 347 787 334 808 329 830 328 854 329 878 333 901 340 929 352 953 368 967 382 982 397 976 392 968 387Q945 377 925 377T901 377L882 379 858 385 834 393 818 402 804 412Q790 418 763 422T685 431z" fill="#090909" stroke="#161616" stroke-width="2"/>
<path d="M982 397L998 418 1020 450 1028 465 1039 483M1039 484Q1045 464 1100 455 1131 449 1164 448" fill="none" stroke="#161616" stroke-width="2"/>
<path d="M685 431L709 393M716 385L734 365 744 357M755 349L787 334 800 331M815 329L829 328M848 329L865 331M885 335L898 339M999 421L1007 432M1018 446L1023 454M804 412L818 402 834 393 858 385 882 379Q901 376 926 377" fill="none" stroke="#0a55ff" stroke-width="2"/>
<path d="M898 339L929 352 953 368 967 382 982 397 996 416M967 382L988 387Q1025 400 1036 407T1062 423 1100 455" fill="none" stroke="#0a55ff"/>
<path d="M1039 485Q1055 476 1100 465L1131 460 1160 455" fill="none" stroke="#ffff10" stroke-width="2"/>
<path d="M951 265V366" stroke="#211f82" stroke-width="2"/><path d="M951 265L955 287H947z" fill="#1d1c80"/>
<path d="M1289 394L1303 386 1330 374 1370 364 1418 361 1472 364 1522 373 1571 387 1613 404 1648 425 1677 448 1701 472 1714 492 1723 511H1665Q1590 514 1560 520T1514 530 1483 551L1468 525 1454 499 1428 465 1405 441 1380 423z" fill="#090909" stroke="#161616" stroke-width="2"/>
<g clip-path="url(#c2)"><path d="M1120 380h320v130h-320z" fill="url(#s2)"/><path d="M1225 496Q1260 482 1271 472 1320 440 1370 448L1430 470" fill="none" stroke="#060606" stroke-width="32" filter="url(#blur2)"/></g>
<path d="M1428 465L1405 441 1380 423 1351 409 1322 400 1292 396 1276 395 1253 396 1225 403 1202 414 1175 436 1152 461 1129 498Q1190 493 1225 485C1258 475 1260 470 1271 464Q1300 448 1330 444T1380 444 1428 465" fill="none" stroke="#161616" stroke-width="2"/>
<g stroke="#ffa50a" stroke-width="2" fill="#ffa50a"><path d="M910 291l19 22M1036 339l3 31M1254 436v34M1338 427l-11 34"/><path d="M927 312h4v3h-4zM1037 369h4v3h-4zM1252.500 434.500h3v3h-3zM1337 426h3v3h-3z" stroke-width="1"/></g><path d="M1337 424h3v4h-3z" fill="#30d030"/>
<path d="M683 429h3v4h-3zM803 410h4v3h-4zM1037 483h4v4h-4z" fill="#fff"/><path d="M1098.500 453.500h3v3h-3z" fill="#111" stroke="#fff"/>
</g>
<g class="navcube"><path d="M1742 165Q1727 170 1719 181" fill="none" stroke="#9b9cc6" stroke-width="7"/><path d="M1713 174l-1 15 12-5z" fill="#9b9cc6"/><path d="M1695 220l11-11v22zM1749 166l7-7v7zM1749 274h7v6z" fill="#9b9cc6"/><path d="M1722 201l6-6h19l9 5v58l-19-8-10-6-5-14z" fill="#a5a7ca"/><path d="M1726 201h30v49l-25-5-5-12z" fill="#d0d1e5"/><text class="cube-label" x="1729" y="228" transform="rotate(7 1729 228)">FRONT</text><text class="axis-label" x="1718" y="191">Z</text><g fill="none" stroke-width="2"><path d="M1716 208l3 41" stroke="#0c08f0"/><path d="M1719 250l32 13" stroke="#f80808"/><path d="M1720 249l29-11" stroke="#00f010"/><path d="M1747 239l6-3" stroke="#90ee98"/></g></g>
</svg>
</section>
</div>
</div>
</main>
</div>
</body>
</html>
```

FILE: styles.css
```css
* { box-sizing: border-box; }
body { margin: 0; height: 100vh; overflow: hidden; font: 13px/18px "Noto Sans", sans-serif; color: #111; }
button { font: inherit; color: inherit; background: none; border: 0; padding: 0; margin: 0; }
h1, h2, ul { margin: 0; padding: 0; font-size: inherit; }
u { text-decoration-thickness: 1px; text-underline-offset: 3px; }
svg { display: block; }
.sprite { position: absolute; }

.desktop { height: 100%; display: flex; flex-direction: column; padding-left: 8px; background: linear-gradient(#1a2a48, #131f35 25%, #141f33 75%, #0f1a30); }
.browser-menu { flex: none; height: 7px; margin-left: 303px; padding-left: 11px; display: flex; align-items: flex-end; gap: 23px; overflow: hidden; background: linear-gradient(#f6f6f5, #e6e5e3); color: #333; line-height: 16px; }

.window { flex: 1; min-height: 0; display: flex; flex-direction: column; background: #343434; padding-left: 2px; }
.titlebar { flex: none; height: 32px; display: flex; align-items: center; padding-bottom: 2px; border-top: 1px solid #484848; color: #fff; }
.titlebar h1 { flex: 1; text-align: center; font-size: 12px; font-weight: bold; }
.dot { width: 4px; height: 4px; margin-left: 14px; border-radius: 50%; background: #ccc; }
.minimize { width: 7px; height: 2px; margin-top: 6px; background: #ddd; }
.client { flex: 1; min-height: 0; display: flex; flex-direction: column; background: #dbdad5; }

.menubar { flex: none; height: 28px; display: flex; align-items: center; gap: 1px; padding-left: 3px; border-top: 1px solid #fff; border-bottom: 1px solid #000; box-shadow: inset 0 -1px #a3a198; }
.menubar button { padding: 0 9px; }

.toolrow { flex: none; height: 40px; display: flex; border-top: 1px solid #fff; border-bottom: 1px solid #000; box-shadow: inset 0 -1px #a3a198; overflow: hidden; }
.group { display: flex; align-items: center; border-right: 1px solid #fff; padding-right: 1px; box-shadow: inset -1px 0 #a3a198; }
.group.last { flex: 1; border-right: 0; box-shadow: none; }
.grip { flex: none; align-self: stretch; width: 11px; margin: 1px 0; border-left: 2px solid #dbdad5; border-right: 1px solid #000; background: linear-gradient(#a3a198, #a3a198) right / 1px 100% no-repeat, conic-gradient(#fff 25%, #dbdad5 0 50%, #fff 0 75%, #dbdad5 0) 0 0 / 2px 2px; }
.tb { flex: none; width: 36px; height: 36px; display: grid; place-items: center; }
.tb svg { width: 24px; height: 24px; }
.tb.on { background: #c5c3be; border: 1px solid #fff; border-top-color: #000; border-left-color: #555; }
.drop { flex: none; width: 18px; height: 36px; padding-left: 3px; color: #000; }
.drop svg { width: 10px; height: 6px; }
.drop.off { color: #77767a; }
.sep { flex: none; width: 11px; height: 24px; background: linear-gradient(90deg, #a3a198 50%, #fff 50%) 5px 0 / 2px 100% no-repeat; }
.workbench { display: flex; align-items: center; width: 166px; height: 28px; margin-right: 1px; padding-left: 6px; border: 1px solid #fff; border-right-color: #000; border-bottom-color: #000; box-shadow: inset -1px -1px #a3a198; }
.wb-icon { width: 18px; height: 18px; }
.workbench select { flex: 1; min-width: 0; appearance: none; border: 0; padding: 0 2px; background: none; font: inherit; color: inherit; }
.workbench .sep { height: 20px; width: 10px; }
.wb-arrow { width: 10px; height: 6px; margin-right: 5px; }

.work { flex: 1; min-height: 0; display: flex; }
.dock { flex: 0 0 673px; display: flex; flex-direction: column; min-height: 0; padding-right: 6px; }
.dock-title { flex: none; height: 28px; display: flex; align-items: center; gap: 6px; padding: 0 5px 0 2px; }
.dock-title h2 { flex: 1; font-weight: normal; }
.dock-title svg { width: 14px; height: 14px; }
.tabs { flex: none; display: flex; align-items: flex-end; height: 30px; padding-left: 1px; }
.tab { height: 27px; padding: 0 7px; background: #c5c3be; border-top: 1px solid #fff; border-right: 1px solid #000; }
.tab.active { height: 30px; padding: 0 7px 0 6px; background: #dbdad5; border-left: 1px solid #fff; }
.pane { flex: 1; min-height: 0; display: flex; flex-direction: column; margin-left: 1px; border-top: 1px solid #fff; border-left: 1px solid #fff; border-right: 1px solid #000; }
.tree-area { flex: 1; min-height: 0; display: flex; gap: 5px; padding: 1px 1px 0 2px; }
.tree { flex: 1; min-width: 0; min-height: 0; display: flex; flex-direction: column; padding-top: 2px; }
.tree-head { flex: none; display: flex; height: 26px; line-height: 25px; }
.tree-head span, .props th { border-top: 1px solid #fff; border-right: 1px solid #000; border-bottom: 1px solid #000; box-shadow: inset -1px -1px #a3a198; padding: 0 4px; font-weight: normal; }
.col-labels { width: 273px; }
.col-desc { width: 100px; }
.rows { flex: 1; min-height: 0; overflow: hidden; background: #fff; list-style: none; }
.rows li { display: flex; align-items: center; height: 22px; color: #111; }
.rows li.l0 { padding: 0 3px; height: 20px; }
.rows li.l1 { padding-left: 6px; }
.rows li.l2 { padding-left: 26px; }
.rows li.l3 { padding-left: 63px; }
.rows li.hidden { color: #888; }
.rows .exp { width: 10px; height: 6px; margin-right: 7px; }
.rows .ic { width: 16px; height: 16px; margin-right: 6px; color: #c8181e; }
.rows .hidden .ic { color: #999; }
.rows li.next { align-items: flex-start; padding-left: 44px; }
.next i { width: 6px; height: 3px; margin-top: 1px; background: #333; }
.scroll { width: 16px; display: flex; flex-direction: column; border-left: 1px solid #888; border-top: 1px solid #888; border-right: 1px solid #fff; background: #c5c3be; }
.scroll button, .thumb { background: #dbdad5; border: 1px solid #fff; border-right-color: #000; border-bottom-color: #000; box-shadow: inset -1px -1px #a3a198; }
.scroll button { flex: none; height: 14px; display: grid; place-items: center; }
.scroll svg { width: 10px; height: 6px; }
.thumb { flex: 250; }
.track { flex: 22; }
.splitter { flex: none; height: 3px; margin: 3px 2px 2px; background: conic-gradient(#fff 25%, #dbdad5 0 50%, #fff 0 75%, #dbdad5 0) 0 0 / 3px 3px; }
.props { flex: none; height: 64px; margin-left: 1px; margin-right: 1px; padding: 3px 3px 0 3px; border-top: 1px solid #fff; border-right: 1px solid #000; overflow: hidden; }
.props table { width: 100%; border-collapse: separate; border-spacing: 0; table-layout: fixed; }
.props th { height: 26px; text-align: left; }
.props .prop-name { width: 157px; }
.props td { padding: 0 3px; height: 23px; }
.props .cat td { padding-left: 24px; background: #b7b5b0; color: #fff; font-weight: bold; }
.props .val td { background: #eee; border-right: 1px solid #b7b5b0; white-space: nowrap; }
.val .exp { display: inline-block; width: 10px; height: 6px; margin: 0 7px 2px 3px; }

.view { flex: 1; min-width: 0; overflow: hidden; background: linear-gradient(#4b4b94, #7d7aa0); }
.view > svg { width: 100%; height: 100%; }
.scene { shape-rendering: crispEdges; }
.cube-label { font: bold 8px "Liberation Sans", sans-serif; fill: #111; }
.axis-label { font: 9px "Liberation Sans", sans-serif; fill: #0c08f0; }
```
